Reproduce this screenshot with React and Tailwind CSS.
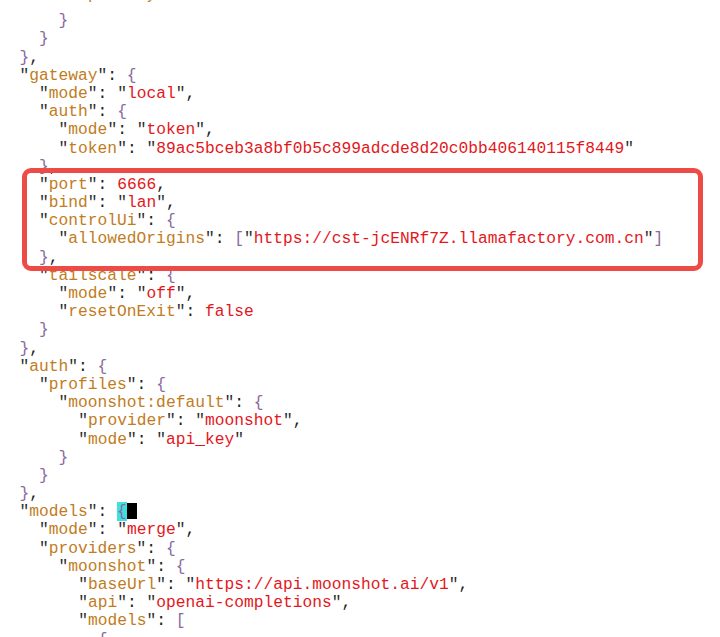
import React from "react"

const lines = [
  `        "primary": "moonshot/kimi-k2.5"`,
  `      }`,
  `    }`,
  `  },`,
  `  "gateway": {`,
  `    "mode": "local",`,
  `    "auth": {`,
  `      "mode": "token",`,
  `      "token": "89ac5bceb3a8bf0b5c899adcde8d20c0bb406140115f8449"`,
  `    },`,
  `    "port": 6666,`,
  `    "bind": "lan",`,
  `    "controlUi": {`,
  `      "allowedOrigins": ["https://cst-jcENRf7Z.llamafactory.com.cn"]`,
  `    },`,
  `    "tailscale": {`,
  `      "mode": "off",`,
  `      "resetOnExit": false`,
  `    }`,
  `  },`,
  `  "auth": {`,
  `    "profiles": {`,
  `      "moonshot:default": {`,
  `        "provider": "moonshot",`,
  `        "mode": "api_key"`,
  `      }`,
  `    }`,
  `  },`,
  `  "models": {`,
  `    "mode": "merge",`,
  `    "providers": {`,
  `      "moonshot": {`,
  `        "baseUrl": "https://api.moonshot.ai/v1",`,
  `        "api": "openai-completions",`,
  `        "models": [`,
  `          {`,
]

// split a json line into coloured pieces
function tokenize(line) {
  const out = []
  let i = 0
  while (i < line.length) {
    const c = line[i]
    if (c === '"') {
      const end = line.indexOf('"', i + 1)
      const inner = line.slice(i + 1, end)
      const isKey = line[end + 1] === ":"
      out.push(["q", '"'])
      out.push([isKey ? "k" : "s", inner])
      out.push(["q", '"'])
      i = end + 1
    } else if ("{}[]".includes(c)) {
      out.push(["b", c])
      i++
    } else if (/[0-9a-z]/.test(c)) {
      let j = i
      while (j < line.length && /[0-9a-z]/.test(line[j])) j++
      out.push(["s", line.slice(i, j)])
      i = j
    } else {
      out.push(["p", c])
      i++
    }
  }
  return out
}

const colors = {
  q: "text-[#2e2e2e]",
  k: "text-[#c17c22]",
  s: "text-[#e3171c]",
  b: "text-[#8b6a9e]",
  p: "text-[#222222]",
}

function CodeLine({ text, index }) {
  const tokens = tokenize(text)
  return (
    <div className="h-[18.2px] whitespace-pre">
      {/* first line is scrolled mostly out of view */}
      <div className={index === 0 ? "-translate-y-[8px]" : ""}>
        {tokens.map((t, i) => {
          // cursor on the models brace
          if (index === 28 && t[0] === "b" && t[1] === "{") {
            return (
              <span key={i}>
                <span className="bg-[#3fe0e0] text-[#8b6a9e]">{"{"}</span>
                <span className="inline-block w-[9.75px] h-[16px] bg-black align-[-3px]"></span>
              </span>
            )
          }
          return (
            <span key={i} className={colors[t[0]]}>
              {t[1]}
            </span>
          )
        })}
      </div>
    </div>
  )
}

export default function App() {
  return (
    <div className="relative w-[720px] h-[637px] overflow-hidden bg-white">
      <div className="-mt-[6px] font-[family-name:Liberation_Mono,Courier_New,monospace] text-[16.25px] leading-[18.2px]">
        {lines.map((l, i) => (
          <CodeLine key={i} text={l} index={i} />
        ))}
      </div>

      {/* highlight box */}
      <div className="absolute left-[22px] top-[168px] w-[681px] h-[103px] border-[5px] border-[#ee4b47] rounded-[9px]"></div>
    </div>
  )
}
